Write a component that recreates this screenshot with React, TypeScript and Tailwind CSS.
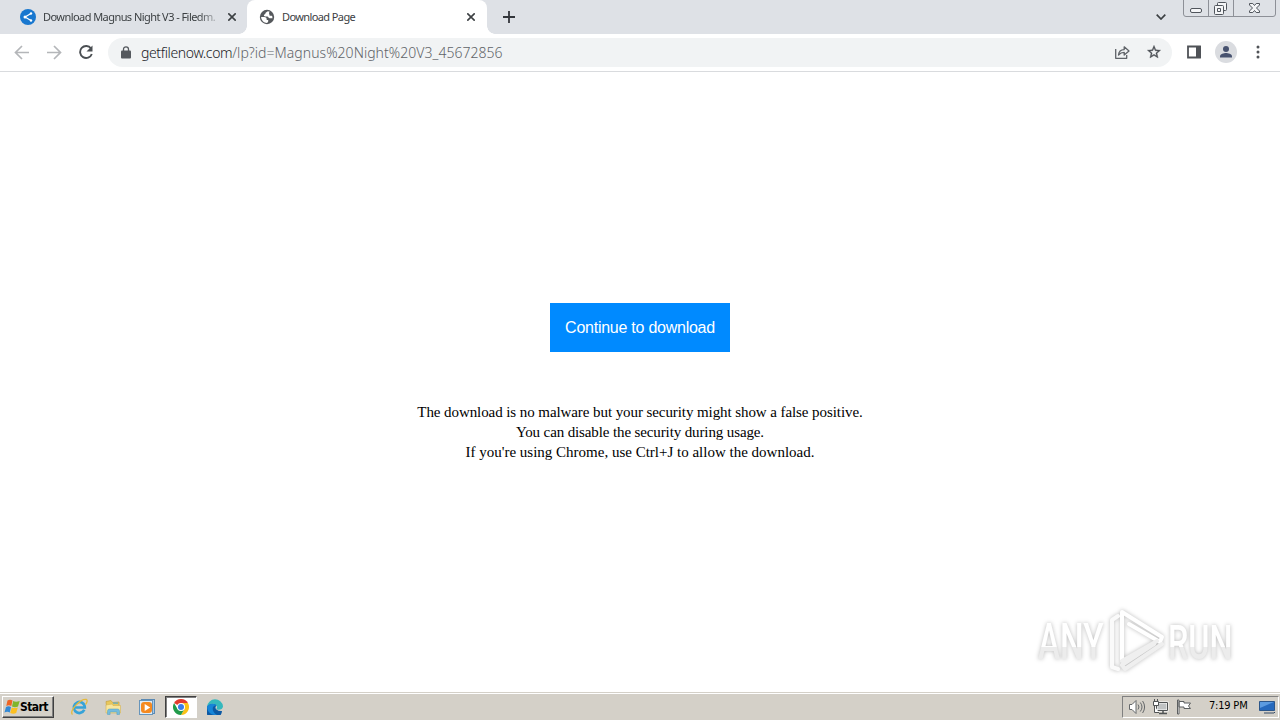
import type { ReactNode } from "react";

interface TabProps {
  title: string;
  icon: ReactNode;
  active?: boolean;
}

function CloseIcon() {
  return (
    <svg width="8" height="8" viewBox="0 0 8 8" stroke="#3c4043" strokeWidth="1.6" className="shrink-0">
      <path d="M.3.3l7.400 7.400M7.700.3L.3 7.700" />
    </svg>
  );
}

function ShareFavicon() {
  return (
    <svg width="16" height="16" viewBox="0 0 16 16" className="shrink-0">
      <circle cx="8" cy="8" r="8" fill="#1877cf" />
      <path d="M11 4.500L5 8l6 3.500" fill="none" stroke="#fff" strokeWidth="1.200" />
      <circle cx="11" cy="4.500" r="1.200" fill="#fff" />
      <circle cx="5" cy="8" r="1.500" fill="#fff" />
      <circle cx="11" cy="11.500" r="1.200" fill="#fff" />
    </svg>
  );
}

function GlobeFavicon() {
  return (
    <svg width="16" height="16" viewBox="0 0 16 16" className="shrink-0">
      <circle cx="8" cy="8" r="7.2" fill="#55585c" />
      <path d="M8.8 2.2C8.2 3 6.4 3.2 6.4 4.600c0 1-.9.8-1.400 1.400-.4.8.3 1.400 1.300 1.400h2c1.200 0 1.200 1.800 2.500 1.800h2.700c-.2-1.200.1-2.200-.9-2.500-1 0-1.200.4-2-.2-.6-.6.1-1.100-.4-1.700-.5-.7-.1-1.500.6-2.100z" fill="#fff" />
      <path d="M2.100 8h3.100c1.500 0 2.500.9 2.500 2.200v.9h1.500v1.300c-.1.500-.6.900-1.200 1.500C4.900 13.900 2.200 11.400 2.100 8z" fill="#fff" />
    </svg>
  );
}

function Tab({ title, icon, active }: TabProps) {
  return (
    <div
      className={
        active
          ? "relative flex h-[34px] w-[240px] items-center rounded-t-lg bg-white pl-3 pr-[12px]"
          : "flex h-[34px] w-[247px] items-center pl-5 pr-[11px]"
      }
    >
      {active && (
        <>
          <span className="absolute -left-2 bottom-0 size-2 bg-[radial-gradient(circle_at_0_0,#dee1e6_7.5px,#fff_8px)]" />
          <span className="absolute -right-2 bottom-0 size-2 bg-[radial-gradient(circle_at_100%_0,#dee1e6_7.5px,#fff_8px)]" />
        </>
      )}
      {icon}
      <span
        className={
          active
            ? "ml-[7px] flex-1 whitespace-nowrap text-[11px] tracking-[-0.6px] text-[#3c4043]"
            : "ml-[7px] mr-1 flex-1 whitespace-nowrap text-[11px] tracking-[-0.56px] text-[#3c4043] [mask-image:linear-gradient(to_right,#000_155px,transparent_180px)]"
        }
      >
        {title}
      </span>
      <CloseIcon />
    </div>
  );
}

function WindowControls() {
  return (
    <svg width="94" height="18" viewBox="0 0 94 18" fill="none" stroke="#8d9097">
      <path d="M.5 0v14q0 2.500 2.500 2.500h87q2.500 0 2.500-2.500V0M25.500 0v16M50.500 0v16" />
      <g stroke="#50555c" fill="#f4f5f7">
        <rect x="7.500" y="8.500" width="11" height="4" rx="1.500" />
        <rect x="34.500" y="2.500" width="9" height="8" rx="1" />
        <rect x="31.500" y="5.500" width="9" height="9" rx="1" />
        <path d="M34.500 8.500h3v3h-3z" />
        <path d="M66.500 3.500h3.300l1.700 2 1.700-2h3.300v1.500l-3 3 3 3v1.500h-3.300l-1.700-2-1.700 2h-3.300V11l3-3-3-3z" />
      </g>
    </svg>
  );
}

function TabStrip() {
  return (
    <div className="flex h-[34px] bg-[#dee1e6]">
      <Tab title="Download Magnus Night V3 - Filedm." icon={<ShareFavicon />} />
      <Tab title="Download Page" icon={<GlobeFavicon />} active />
      <div className="flex flex-1 items-center pl-4">
        <svg width="12" height="12" viewBox="0 0 12 12" stroke="#33363b" strokeWidth="1.800">
          <path d="M6 0v12M0 6h12" />
        </svg>
      </div>
      <div className="flex items-center pr-[17px]">
        <svg width="10" height="6" viewBox="0 0 10 6" fill="none" stroke="#3c4043" strokeWidth="1.700">
          <path d="M.7.7L5 5 9.300.7" />
        </svg>
      </div>
      <div className="pr-[3px]">
        <WindowControls />
      </div>
    </div>
  );
}

function Toolbar() {
  return (
    <div className="flex h-[38px] items-center border-b border-[#d9dbde] bg-white">
      <div className="flex w-[108px] items-center gap-4 pl-[14px]">
        <svg width="16" height="16" viewBox="0 0 16 16" fill="none" stroke="#b4b6b9" strokeWidth="1.700">
          <path d="M15 7.500H2M8 1L1.500 7.500 8 14" />
        </svg>
        <svg width="16" height="16" viewBox="0 0 16 16" fill="none" stroke="#b4b6b9" strokeWidth="1.700">
          <path d="M1 7.500h13M8 1l6.500 6.500L8 14" />
        </svg>
        <svg width="16" height="16" viewBox="0 0 16 16" fill="none" stroke="#4b4f53" strokeWidth="1.900">
          <path d="M13 3.500A6 6 0 1 0 13.800 9" />
          <path d="M14.500.5v6H8.500z" fill="#4b4f53" stroke="none" />
        </svg>
      </div>
      <div className="flex h-[29px] w-[1064px] items-center rounded-full bg-[#f1f3f4] pl-[13px] pr-[10px]">
        <svg width="10" height="13" viewBox="0 0 10 13" className="mb-px">
          <rect y="4.500" width="10" height="8" rx="1" fill="#55595e" />
          <path d="M2.500 5V3.300a2.500 2.500 0 0 1 5 0V5" fill="none" stroke="#55595e" strokeWidth="1.300" />
        </svg>
        <span className="ml-[10px] flex-1 whitespace-nowrap text-[14px] font-light text-[#5f6368]">
          <span className="tracking-[-0.37px] text-[#202124]">getfilenow.com</span>
          <span className="tracking-[0.04px]">/lp?id=Magnus%20Night%20V3_45672856</span>
        </span>
        <svg width="16" height="16" viewBox="0 0 16 16" fill="none" stroke="#5f6368" strokeWidth="1.300" strokeLinejoin="round" className="mb-px mr-4">
          <path d="M1.700 5v9.300h11V11" />
          <path d="M4.500 11c.3-3.600 2.300-5.300 5.700-5.400V2.800L15 7l-4.800 4V8.300C7.800 8.300 6 9.200 4.500 11z" />
        </svg>
        <svg width="16" height="16" viewBox="0 0 24 24" fill="#4b4f54" className="mb-px">
          <path d="M22 9.240l-7.190-.62L12 2 9.190 8.630 2 9.240l5.460 4.730L5.820 21 12 17.270 18.180 21l-1.630-7.030L22 9.240zM12 15.400l-3.760 2.270 1-4.280-3.320-2.880 4.380-.38L12 6.100l1.710 4.040 4.380.38-3.320 2.880 1 4.280L12 15.400z" stroke="#4b4f54" strokeWidth=".5" />
        </svg>
      </div>
      <svg width="14" height="14" viewBox="0 0 14 14" className="mb-px ml-[15px]">
        <path d="M1 1.500h12v11H1z" fill="#fff" stroke="#4f5257" strokeWidth="1.800" />
        <path d="M9 1h5v12H9z" fill="#4f5257" />
      </svg>
      <svg width="22" height="22" viewBox="0 0 22 22" className="mb-px ml-[14px]">
        <circle cx="11" cy="11" r="11" fill="#dadce0" />
        <circle cx="11" cy="8" r="3" fill="#47526f" />
        <path d="M5 16.500v-1.200c0-2.100 4-3.200 6-3.200s6 1.100 6 3.200v1.200z" fill="#47526f" />
      </svg>
      <svg width="4" height="14" viewBox="0 0 4 14" fill="#505357" className="mb-px ml-[19px]">
        <circle cx="2" cy="2" r="1.500" />
        <circle cx="2" cy="7" r="1.500" />
        <circle cx="2" cy="12" r="1.500" />
      </svg>
    </div>
  );
}

function Watermark() {
  return (
    <svg
      width="220"
      height="80"
      viewBox="0 0 220 80"
      className="absolute left-[1030px] top-[533px] overflow-visible [filter:drop-shadow(0_0_2px_#bbbbbb)]"
    >
      <defs>
        <linearGradient id="mark" x1="0" y1="0" x2="0" y2="1">
          <stop offset=".58" stopColor="#fff" />
          <stop offset=".59" stopColor="#ececec" />
        </linearGradient>
      </defs>
      <g fill="url(#mark)" fontFamily="Roboto, sans-serif" fontSize="49" fontWeight="500">
        <text transform="translate(8 54) scale(.68 1)">ANY</text>
        <text transform="translate(138 54) scale(.66 1)">RUN</text>
      </g>
      <g fill="none" strokeWidth="4" strokeLinejoin="round" strokeLinecap="round">
        <path d="M88 11l-6 4v47l6 2" stroke="#fafafa" />
        <path d="M92 55V7l40 25-2 5-31-18" stroke="#fff" />
        <path d="M92 56l35-20M132 39L95 64l-3-4 32-21" stroke="#efefef" />
      </g>
    </svg>
  );
}

function Page() {
  return (
    <main className="relative flex h-[620px] flex-col items-center bg-white pt-[231px]">
      <button className="h-[49px] w-[180px] bg-[#008aff] text-center font-['Liberation_Sans',sans-serif] text-[16px] tracking-[-0.25px] text-white">
        Continue to download
      </button>
      <div className="mt-[50px] text-center font-['Liberation_Serif',serif] text-[15px] leading-5 text-black">
        <p className="tracking-[-0.08px]">The download is no malware but your security might show a false positive.</p>
        <p className="tracking-[-0.12px]">You can disable the security during usage.</p>
        <p>If you're using Chrome, use Ctrl+J to allow the download.</p>
      </div>
      <Watermark />
    </main>
  );
}

function StartButton() {
  return (
    <button className="ml-[2px] flex h-[22px] w-[52px] items-center border border-b-[#404040] border-l-white border-r-[#404040] border-t-white bg-[#d4d0c8] pl-px shadow-[inset_-1px_-1px_#808080]">
      <svg width="16" height="16" viewBox="0 0 16 16" className="shrink-0">
        <path d="M3.500 1.500q2.500-1.500 5 0L7.300 7q-2.500-1.400-5 0z" fill="#ef6524" />
        <path d="M9.200 2q2.500 1.400 6.500 0l-1.700 5.600q-3 1.300-6 0z" fill="#80b52b" />
        <path d="M2 7.900q2.500-1.400 5 0L5.800 13.500q-2.500-1.400-5.300 0z" fill="#3389d5" />
        <path d="M7.800 8.400q2.500 1.400 6 0L12.200 14q-2.800 1.300-6 0z" fill="#fcbf20" />
      </svg>
      <span className="font-['DejaVu_Sans_Condensed','DejaVu_Sans',sans-serif] text-[12px] font-bold tracking-[-0.55px] text-black">Start</span>
    </button>
  );
}

function ExplorerIcon() {
  return (
    <svg width="18" height="18" viewBox="0 0 18 18">
      <path d="M14.300 11.800A5.500 5.500 0 1 1 14.800 9.500H5" fill="none" stroke="#36a3d8" strokeWidth="2.700" />
      <path d="M2.500 16.500C-1.500 13 11 0 16.500 1.500c1.300 1 .3 3.500-1 5" fill="none" stroke="#e5ba3c" strokeWidth="1.300" />
    </svg>
  );
}

function FolderIcon() {
  return (
    <svg width="18" height="18" viewBox="0 0 18 18">
      <path d="M2 3.500l5-1 1.500 2L15 4v10H3z" fill="#e9c85b" stroke="#c5a041" strokeWidth=".7" />
      <path d="M2 7l6-1 1 1.500h7.500V15H2z" fill="#f8e69d" stroke="#d4b355" strokeWidth=".6" />
      <path d="M3.500 16.500V13q0-2 2-2h8q2 0 2 2v3.500h-2.600V14H6.100v2.500z" fill="#75bcdd" stroke="#509fbe" strokeWidth=".5" />
      <path d="M9 4.500h5v1.200H9z" fill="#58a9cd" />
    </svg>
  );
}

function PlayerIcon() {
  return (
    <svg width="18" height="18" viewBox="0 0 18 18">
      <rect x="3.500" y="1.500" width="13" height="14" fill="#a9cbe7" stroke="#5a89b3" />
      <rect x="1.500" y="2.500" width="13" height="14" fill="#dfedf8" stroke="#6795bb" />
      <rect x="3" y="4" width="11" height="11" rx="3" fill="#f58a20" />
      <path d="M6.700 6v7l5.500-3.500z" fill="#fff" />
    </svg>
  );
}

function ChromeIcon() {
  return (
    <svg width="16" height="16" viewBox="0 0 16 16">
      <path d="M8 8L1.070 4A8 8 0 0 1 14.930 4z" fill="#e33b2e" />
      <path d="M8 8V4h6.930A8 8 0 0 1 8 16l3.460-6z" fill="#fbc116" />
      <path d="M8 8l3.460 2L8 16A8 8 0 0 1 1.070 4l3.470 6z" fill="#229b4b" />
      <circle cx="8" cy="8" r="4" fill="#fff" />
      <circle cx="8" cy="8" r="3" fill="#397de9" />
    </svg>
  );
}

function EdgeIcon() {
  return (
    <svg width="16" height="16" viewBox="0 0 16 16">
      <path d="M15 12A8 8 0 1 1 .1 7.500C2 3 9 4 9.700 6.500 7 8 8.500 12.500 15 12z" fill="#0c59a4" />
      <path d="M.1 7.500A8 8 0 0 1 16 7.300c.1 3-4 4.300-6.200 2.900-.7-.5.2-.9.200-2.200C9.800 4 3 3.500.1 7.500z" fill="#35b8bd" />
      <path d="M.1 7.500C2.500 3.700 8 4 9.700 6.500 6 5.900 5 9 6.200 12c.8 2 2.300 3.200 4.100 3.600A8 8 0 0 1 .1 7.500z" fill="#1685d8" />
    </svg>
  );
}

function Tray() {
  return (
    <div className="mr-px flex h-[22px] w-[157px] items-center border border-b-white border-l-[#808080] border-r-white border-t-[#808080] pl-[5px]">
      <svg width="18" height="16" viewBox="0 0 18 16" fill="none" stroke="#65686a" className="shrink-0">
        <path d="M1.500 5.500H4l4-4v13l-4-4H1.500z" fill="#fff" />
        <path d="M10 5.500q2 2.500 0 5M12.300 3.500q3.400 4.500 0 9M14.600 2q4 6 0 12" />
      </svg>
      <svg width="17" height="16" viewBox="0 0 17 16" fill="none" stroke="#505354" className="ml-[6px] shrink-0">
        <path d="M4.500 3.500h11v8h-11z" fill="#bfc2c3" stroke="#fff" strokeWidth="2" />
        <path d="M4.500 3.500h11v8h-11z" />
        <path d="M7 14.500h8M11 12v3" strokeWidth="1.500" />
        <path d="M1.500 2.500h5v4h-5zM2.500 0v2M5.500 0v2M2.500 7v6.500H7" fill="#fff" />
      </svg>
      <svg width="16" height="16" viewBox="0 0 16 16" fill="#fff" stroke="#5c5f60" className="ml-[7px] shrink-0">
        <path d="M1.500 1v14H3V1zM3 2.500h5V4h6.500l-2 3 2 2.500H8V8H3z" />
      </svg>
      <span className="ml-[17px] w-10 whitespace-nowrap font-['DejaVu_Sans_Condensed','DejaVu_Sans',sans-serif] text-[11px] tracking-[-0.2px] text-black">
        7:19 PM
      </span>
      <svg width="16" height="14" viewBox="0 0 16 14" className="ml-[10px] shrink-0">
        <path d="M.5 1.500h15v9H.5z" fill="#2669bd" stroke="#2c568a" />
        <path d="M1 2h14L1 8z" fill="#5c9be0" />
        <path d="M5 13h10l1-1" fill="none" stroke="#344a67" />
      </svg>
    </div>
  );
}

function Taskbar() {
  return (
    <footer className="flex h-7 items-center border-t border-[#d4d0c8] bg-[#d4d0c8] shadow-[inset_0_1px_#fff]">
      <StartButton />
      <div className="ml-4 flex flex-1 items-center">
        <ExplorerIcon />
        <span className="ml-4 flex"><FolderIcon /></span>
        <span className="ml-4 flex"><PlayerIcon /></span>
        <span className="ml-[9px] flex h-[22px] w-8 items-center justify-center border border-b-white border-l-[#404040] border-r-white border-t-[#404040] bg-white shadow-[inset_1px_1px_#808080]">
          <ChromeIcon />
        </span>
        <span className="ml-[10px] flex"><EdgeIcon /></span>
      </div>
      <Tray />
    </footer>
  );
}

export default function App() {
  return (
    <div className="flex h-[720px] w-[1280px] flex-col overflow-hidden bg-white font-['Noto_Sans',sans-serif]">
      <TabStrip />
      <Toolbar />
      <Page />
      <Taskbar />
    </div>
  );
}
